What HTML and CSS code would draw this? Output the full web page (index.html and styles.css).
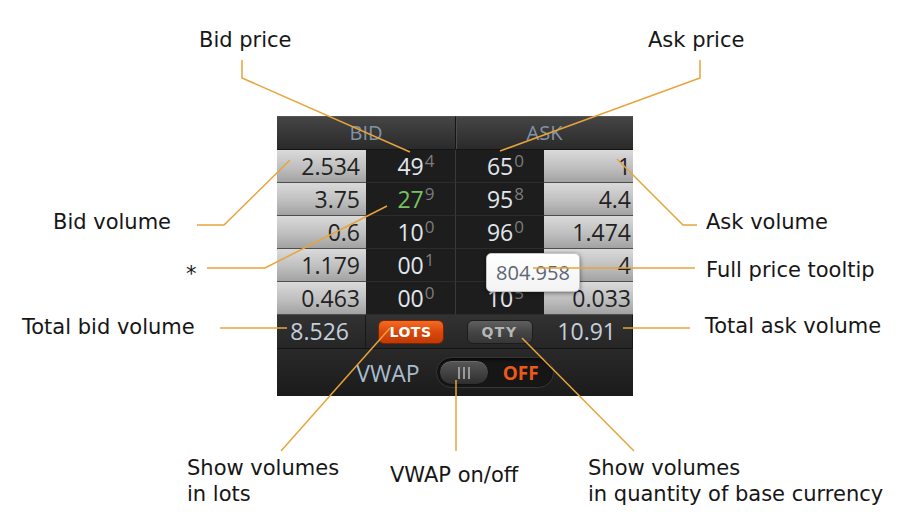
FILE: index.html
```html
<!DOCTYPE html>
<html>
<head>
    <meta charset="utf-8">
    <title>Order book widget</title>
    <link rel="stylesheet" href="styles.css">
</head>

<body>
<div class="canvas">
    <div class="book">
        <div class="book-head">BID</div>
        <div class="book-head ask">ASK</div>

        <div class="vol">2.534</div>
        <div class="price">49<sup>4</sup></div>
        <div class="price ask">65<sup>0</sup></div>
        <div class="vol ask-vol">1</div>

        <div class="vol">3.75</div>
        <div class="price up">27<sup>9</sup></div>
        <div class="price ask">95<sup>8</sup></div>
        <div class="vol ask-vol">4.4</div>

        <div class="vol">0.6</div>
        <div class="price">10<sup>0</sup></div>
        <div class="price ask">96<sup>0</sup></div>
        <div class="vol ask-vol">1.474</div>

        <div class="vol">1.179</div>
        <div class="price">00<sup>1</sup></div>
        <!-- hidden under the tooltip -->
        <div class="price ask"></div>
        <div class="vol ask-vol">4</div>

        <div class="vol">0.463</div>
        <div class="price">00<sup>0</sup></div>
        <div class="price ask">10<sup>5</sup></div>
        <div class="vol ask-vol">0.033</div>

        <div class="total">8.526</div>
        <div class="mode"><span class="btn btn-lots">LOTS</span></div>
        <div class="mode"><span class="btn btn-qty">QTY</span></div>
        <div class="total">10.91</div>

        <div class="vwap">
            <span class="vwap-label">VWAP</span>
            <span class="toggle">
                <span class="knob"><i></i><i></i><i></i></span>
                <span class="toggle-state">OFF</span>
            </span>
        </div>

        <div class="tip">804.958</div>
    </div>

    <span class="note note-bid-price">Bid price</span>
    <span class="note note-ask-price">Ask price</span>
    <span class="note note-bid-vol">Bid volume</span>
    <span class="note note-star">*</span>
    <span class="note note-total-bid">Total bid volume</span>
    <span class="note note-ask-vol">Ask volume</span>
    <span class="note note-tip">Full price tooltip</span>
    <span class="note note-total-ask">Total ask volume</span>
    <span class="note note-lots">Show volumes<br>in lots</span>
    <span class="note note-vwap">VWAP on/off</span>
    <span class="note note-qty">Show volumes<br>in quantity of base currency</span>

    <svg class="leaders" width="904" height="514" viewBox="0 0 904 514">
        <polyline points="242,60 242,78 410,152"/>
        <polyline points="700,60 700,78 500,151"/>
        <polyline points="197,225 224,225 290,160"/>
        <polyline points="207,268 265,268 387,206"/>
        <polyline points="220,328 287,328"/>
        <polyline points="617,159 683,225 697,225"/>
        <polyline points="533,268 695,268"/>
        <polyline points="623,328 690,328"/>
        <polyline points="390,328 281,451"/>
        <polyline points="456,380 456,451"/>
        <polyline points="522,338 634,451"/>
    </svg>
</div>
</body>
</html>
```

FILE: styles.css
```css
* {
    margin: 0;
    padding: 0;
    box-sizing: border-box;
}

body {
    background: #fff;
    font-family: "DejaVu Sans", Verdana, sans-serif;
}

.canvas {
    position: relative;
    width: 904px;
    height: 514px;
    overflow: hidden;
}

/* order book widget */
.book {
    position: absolute;
    left: 277px;
    top: 116px;
    display: grid;
    grid-template-columns: repeat(4, 89px);
    grid-template-rows: 34px repeat(6, 33px) 48px;
    background: #1c1c1c;
    font-family: "Open Sans", "Liberation Sans", sans-serif;
    font-size: 23px;
}

.book-head {
    grid-column: span 2;
    background: linear-gradient(#454545, #2a2a2a);
    border-top: 1px solid #555;
    border-bottom: 1px solid #151515;
    color: #8093a6;
    font-size: 20px;
    line-height: 32px;
    text-align: center;
}

.book-head.ask {
    border-left: 1px solid #151515;
    box-shadow: inset 1px 0 #4c4c4c;
}

.vol {
    background: linear-gradient(#dadada, #bfbfbf 55%, #a2a2a2);
    border-bottom: 1px solid #4e4e4e;
    color: #222;
    line-height: 32px;
    text-align: right;
    padding-right: 6px;
}

.vol.ask-vol {
    padding-right: 2px;
}

.price {
    background: #1d1d1d;
    border-bottom: 1px solid #2c2c2c;
    color: #e1e7ee;
    line-height: 32px;
    text-align: center;
}

.price.ask {
    border-left: 1px solid #3a3a3a;
}

.price.up {
    color: #78c263;
}

.price sup {
    font-size: 17px;
    line-height: 0;
    vertical-align: 8px;
    color: #7c7c7c;
    margin-left: 1px;
    margin-right: -11px;
}

.total {
    background: linear-gradient(#323232, #262626);
    border-right: 1px solid #181818;
    color: #c3cfdb;
    line-height: 33px;
    text-align: right;
    padding-right: 16px;
}

.mode {
    display: flex;
    align-items: center;
    justify-content: center;
    background: linear-gradient(#323232, #262626);
}

.btn {
    width: 66px;
    height: 24px;
    border-radius: 6px;
    font: bold 14px/22px "DejaVu Sans", sans-serif;
    letter-spacing: 0.5px;
    text-align: center;
}

.btn-lots {
    background: linear-gradient(#f46c24, #da480c 50%, #c13a06);
    border: 1px solid #7a2500;
    color: #fff;
}

.btn-qty {
    background: linear-gradient(#606060, #454545 50%, #363636);
    border: 1px solid #1c1c1c;
    color: #b6b6b6;
    letter-spacing: 1.5px;
}

.vwap {
    grid-column: 1 / -1;
    display: flex;
    align-items: center;
    justify-content: center;
    gap: 16px;
    background: linear-gradient(#292929, #1b1b1b);
    border-top: 1px solid #141414;
}

.vwap-label {
    color: #a9bdd0;
    font-size: 23px;
}

.toggle {
    display: flex;
    align-items: center;
    width: 118px;
    height: 31px;
    padding-left: 2px;
    border-radius: 16px;
    background: #161616;
    border: 1px solid #363636;
    box-shadow: inset 0 2px 3px rgba(0, 0, 0, 0.6);
}

.knob {
    display: flex;
    align-items: center;
    justify-content: center;
    gap: 3px;
    width: 50px;
    height: 25px;
    border-radius: 13px;
    background: linear-gradient(#575757, #2e2e2e);
    border: 1px solid #121212;
    box-shadow: inset 0 1px #6a6a6a;
}

.knob i {
    display: block;
    width: 2px;
    height: 12px;
    background: #999;
}

.toggle-state {
    margin-left: 14px;
    color: #eb5a1c;
    font-size: 19px;
    font-weight: bold;
}

.tip {
    position: absolute;
    left: 209px;
    top: 137px;
    width: 94px;
    height: 39px;
    background: linear-gradient(#fff, #f3f3f3);
    border: 1px solid #c6c6c6;
    border-radius: 5px;
    box-shadow: 0 1px 4px rgba(0, 0, 0, 0.5);
    color: #5d6675;
    font-size: 20px;
    line-height: 37px;
    text-align: center;
}

/* annotations */
.note {
    position: absolute;
    white-space: nowrap;
    color: #161616;
    font-size: 21px;
    line-height: 24px;
}

.note-bid-price { left: 199px; top: 28px; }
.note-ask-price { left: 648px; top: 28px; }
.note-bid-vol { left: 53px; top: 210px; }
.note-star { left: 186px; top: 262px; }
.note-total-bid { left: 22px; top: 315px; }
.note-ask-vol { left: 706px; top: 210px; }
.note-tip { left: 706px; top: 258px; }
.note-total-ask { left: 705px; top: 314px; }
.note-lots { left: 187px; top: 455px; line-height: 26px; }
.note-vwap { left: 390px; top: 463px; }
.note-qty { left: 588px; top: 455px; line-height: 26px; }

.leaders {
    position: absolute;
    left: 0;
    top: 0;
    pointer-events: none;
}

.leaders polyline {
    fill: none;
    stroke: #e8a33a;
    stroke-width: 1.5;
}
```
